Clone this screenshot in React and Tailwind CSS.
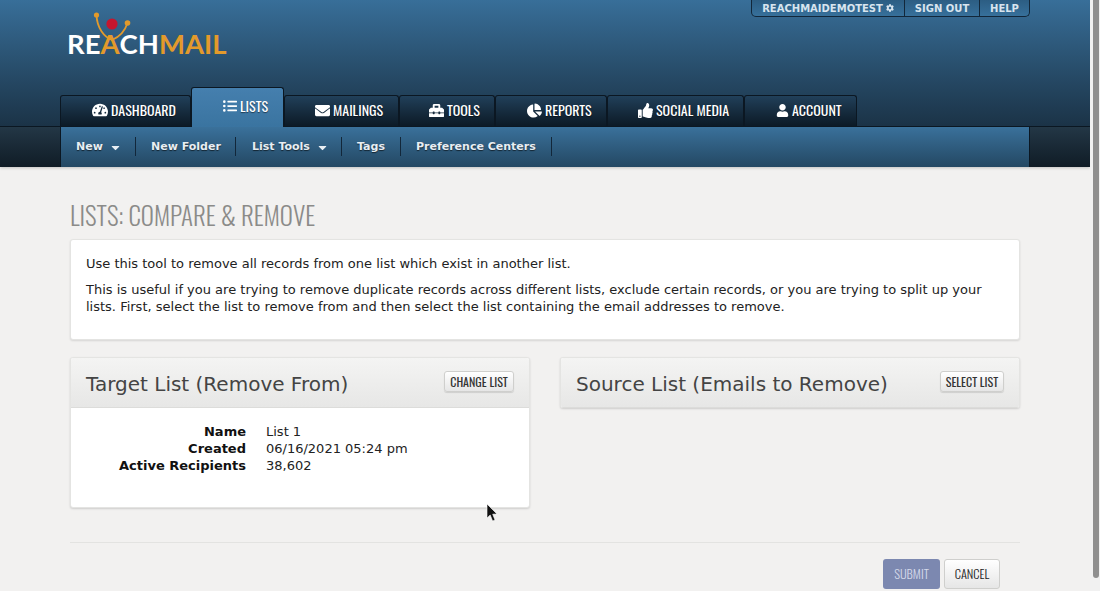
import React from "react";
import {
  FaTachometerAlt,
  FaListUl,
  FaEnvelope,
  FaToolbox,
  FaChartPie,
  FaThumbsUp,
  FaUser,
  FaCog,
  FaCaretDown,
} from "react-icons/fa";

const condensed = "font-['Oswald','Liberation_Sans_Narrow','Liberation_Sans',sans-serif]";

const tabs = [
  { label: "DASHBOARD", icon: FaTachometerAlt, width: "w-[131px]", pl: "pl-[31px]", iconSize: 16 },
  { label: "LISTS", icon: FaListUl, width: "w-[93px]", pl: "pl-[31px]", iconSize: 14, active: true },
  { label: "MAILINGS", icon: FaEnvelope, width: "w-[115px]", pl: "pl-[30px]", iconSize: 15 },
  { label: "TOOLS", icon: FaToolbox, width: "w-[96px]", pl: "pl-[29px]", iconSize: 15 },
  { label: "REPORTS", icon: FaChartPie, width: "w-[112px]", pl: "pl-[31px]", iconSize: 15 },
  { label: "SOCIAL MEDIA", icon: FaThumbsUp, width: "w-[137px]", pl: "pl-[30px]", iconSize: 15 },
  { label: "ACCOUNT", icon: FaUser, width: "w-[113px]", pl: "pl-[31px]", iconSize: 13 },
];

const subItems = [
  { label: "New", width: "w-[75px]", pl: "pl-[15px]", caret: true },
  { label: "New Folder", width: "w-[100px]", pl: "pl-[15px]" },
  { label: "List Tools", width: "w-[106px]", pl: "pl-[16px]", caret: true },
  { label: "Tags", width: "w-[59px]", pl: "pl-[15px]" },
  { label: "Preference Centers", width: "w-[151px]", pl: "pl-[15px]" },
];

const Logo = () => (
  <div className="relative h-[50px] w-[162px] translate-x-[67px] translate-y-[12px]">
    <svg className="absolute left-[22px] top-0" width="80" height="40" viewBox="0 0 80 40" fill="none">
      <circle cx="7.5" cy="3" r="2.6" fill="#e39a2b" />
      <circle cx="38.5" cy="11" r="2.8" fill="#e39a2b" />
      <path d="M7.5 3 C8 16 15 25 23 28 C30 25 36 19 38.5 11" stroke="#e39a2b" strokeWidth="1.8" />
      <circle cx="23" cy="12" r="5.6" fill="#c5162e" />
    </svg>
    <div className="absolute left-0 top-[15px] flex font-['Lato',sans-serif] text-[27.5px] leading-[34px] font-bold">
      <span className="text-white">RE</span>
      <span className="text-[#e39a2b]">A</span>
      <span className="text-white">CH</span>
      <span className="text-[#e39a2b]">MAIL</span>
    </div>
  </div>
);

const Card = ({ title, button, buttonWidth, children }) => (
  <div
    className={`flex-1 self-start overflow-hidden rounded-[3px] border border-[#e4e4e2] bg-white shadow-[0_1px_2px_rgba(0,0,0,0.15)] ${
      children ? "" : "border-b-0"
    }`}
  >
    <div className="flex h-[50px] items-center justify-between border-b border-[#dcdcda] bg-gradient-to-b from-[#f4f4f3] to-[#e7e7e6] px-[15px]">
      <h2 className="pt-[2px] text-[20px] text-[#444444]">{title}</h2>
      <button
        className={`${buttonWidth} ${condensed} -mt-[2px] h-[21px] rounded-[3px] border border-[#cfcfcd] bg-gradient-to-b from-white to-[#e6e6e6] text-[12px] text-[#333333] shadow-[0_1px_1px_rgba(0,0,0,0.12)]`}
      >
        {button}
      </button>
    </div>
    {children}
  </div>
);

const App = () => {
  return (
    <div className="relative flex h-[591px] w-[1100px] overflow-hidden bg-[#f2f1f0] font-['DejaVu_Sans',sans-serif]">
      <div className="w-[1090px] shrink-0">
        <header className="relative h-[127px] border-b border-[#0b1722] bg-gradient-to-b from-[#386f99] to-[#1b3347]">
          <Logo />
          <div className="absolute left-[751px] top-0 flex h-[17px] w-[279px] items-center rounded-b-[5px] border border-t-0 border-[#12273a] bg-gradient-to-b from-[#2c5d83] to-[#37709b] text-[10px] font-bold text-[#d8e4ee]">
            <span className="flex h-full w-[153px] items-center justify-center gap-[3px] border-r border-[#12273a]">
              REACHMAIDEMOTEST <FaCog size={8} />
            </span>
            <span className="flex h-full w-[75px] items-center justify-center border-r border-[#12273a]">SIGN OUT</span>
            <span className="flex h-full flex-1 items-center justify-center">HELP</span>
          </div>
          <nav className="absolute bottom-0 left-[60px] flex items-end">
            {tabs.map((tab) => {
              const Icon = tab.icon;
              return (
                <a
                  key={tab.label}
                  className={`${tab.width} ${tab.pl} ${condensed} flex items-center gap-[3px] rounded-t-[3px] border border-b-0 border-[#0b1722] pb-[4px] text-[14px] text-white [text-shadow:0_1px_1px_rgba(0,0,0,0.5)] ${
                    tab.active
                      ? "relative z-10 -mb-px h-[40px] bg-gradient-to-b from-[#457fae] to-[#3a74a0]"
                      : "h-[31px] bg-gradient-to-b from-[#21405a] to-[#0c1a26]"
                  }`}
                >
                  <Icon size={tab.iconSize} className={tab.active ? "" : "translate-y-[1px]"} />
                  {tab.label}
                </a>
              );
            })}
          </nav>
        </header>
        <div className="flex h-[40px] bg-gradient-to-b from-[#233746] to-[#101c26] shadow-[0_1px_3px_rgba(0,0,0,0.2)]">
          <div className="w-[60px]" />
          <div className="flex w-[970px] items-center border-x border-[#0b1722] bg-gradient-to-b from-[#3a719b] to-[#244863] pb-[1px]">
            {subItems.map((item) => (
              <div
                key={item.label}
                className={`${item.width} ${item.pl} flex h-[19px] items-center gap-[6px] border-r border-[#12273a] pt-[2px] text-[11px] font-bold text-[#e8eef3] [text-shadow:0_1px_1px_rgba(0,0,0,0.6)]`}
              >
                {item.label}
                {item.caret && <FaCaretDown size={13} />}
              </div>
            ))}
          </div>
        </div>
        <main className="px-[70px] pt-[31px]">
          <h1 className={`${condensed} h-[41px] text-[25px] font-light leading-[34px] text-[#8b8b89]`}>LISTS: COMPARE &amp; REMOVE</h1>
          <section className="h-[101px] rounded-[3px] border border-[#e4e4e2] bg-white px-[15px] pt-[15px] text-[13px] leading-[17px] text-[#222222] shadow-[0_1px_2px_rgba(0,0,0,0.12)]">
            <p className="mb-[9px]">Use this tool to remove all records from one list which exist in another list.</p>
            <p>
              This is useful if you are trying to remove duplicate records across different lists, exclude certain records, or you are trying to split up your
              lists. First, select the list to remove from and then select the list containing the email addresses to remove.
            </p>
          </section>
          <div className="mt-[17px] flex gap-[30px]">
            <Card title="Target List (Remove From)" button="CHANGE LIST" buttonWidth="w-[70px]">
              <dl className="grid h-[99px] grid-cols-[175px_1fr] content-start gap-x-[20px] pt-[15px] text-[13px] leading-[17px] text-[#222222]">
                <dt className="text-right font-bold text-[#111111]">Name</dt>
                <dd>List 1</dd>
                <dt className="text-right font-bold text-[#111111]">Created</dt>
                <dd>06/16/2021 05:24 pm</dd>
                <dt className="text-right font-bold text-[#111111]">Active Recipients</dt>
                <dd>38,602</dd>
              </dl>
            </Card>
            <Card title="Source List (Emails to Remove)" button="SELECT LIST" buttonWidth="w-[64px]" />
          </div>
          <div className="mt-[34px] border-t border-[#e3e3e1]" />
          <div className="mt-[16px] flex justify-end gap-[4px] pr-[20px]">
            <button className={`${condensed} h-[30px] w-[57px] rounded-[3px] bg-[#7c88b0] text-[12.5px] font-light text-[#d5daea]`}>SUBMIT</button>
            <button className={`${condensed} h-[30px] w-[56px] rounded-[3px] border border-[#cfcfcd] bg-gradient-to-b from-white to-[#e6e6e6] text-[12.5px] font-light text-[#222222]`}>CANCEL</button>
          </div>
        </main>
      </div>
      <div className="w-[10px] bg-[#f1f1f1] pl-[3px] pr-[1px]">
        <div className="h-[578px] rounded-b-[3px] bg-[#8f8f8f]" />
      </div>
      <svg className="absolute left-[486px] top-[503px]" width="13" height="20" viewBox="0 0 13 20">
        <path d="M1 1 L1 15 L4.2 12 L6.6 18 L9 17 L6.7 11.2 L11 11 Z" fill="#111" stroke="#fff" strokeWidth="0.6" />
      </svg>
    </div>
  );
};

export default App;
